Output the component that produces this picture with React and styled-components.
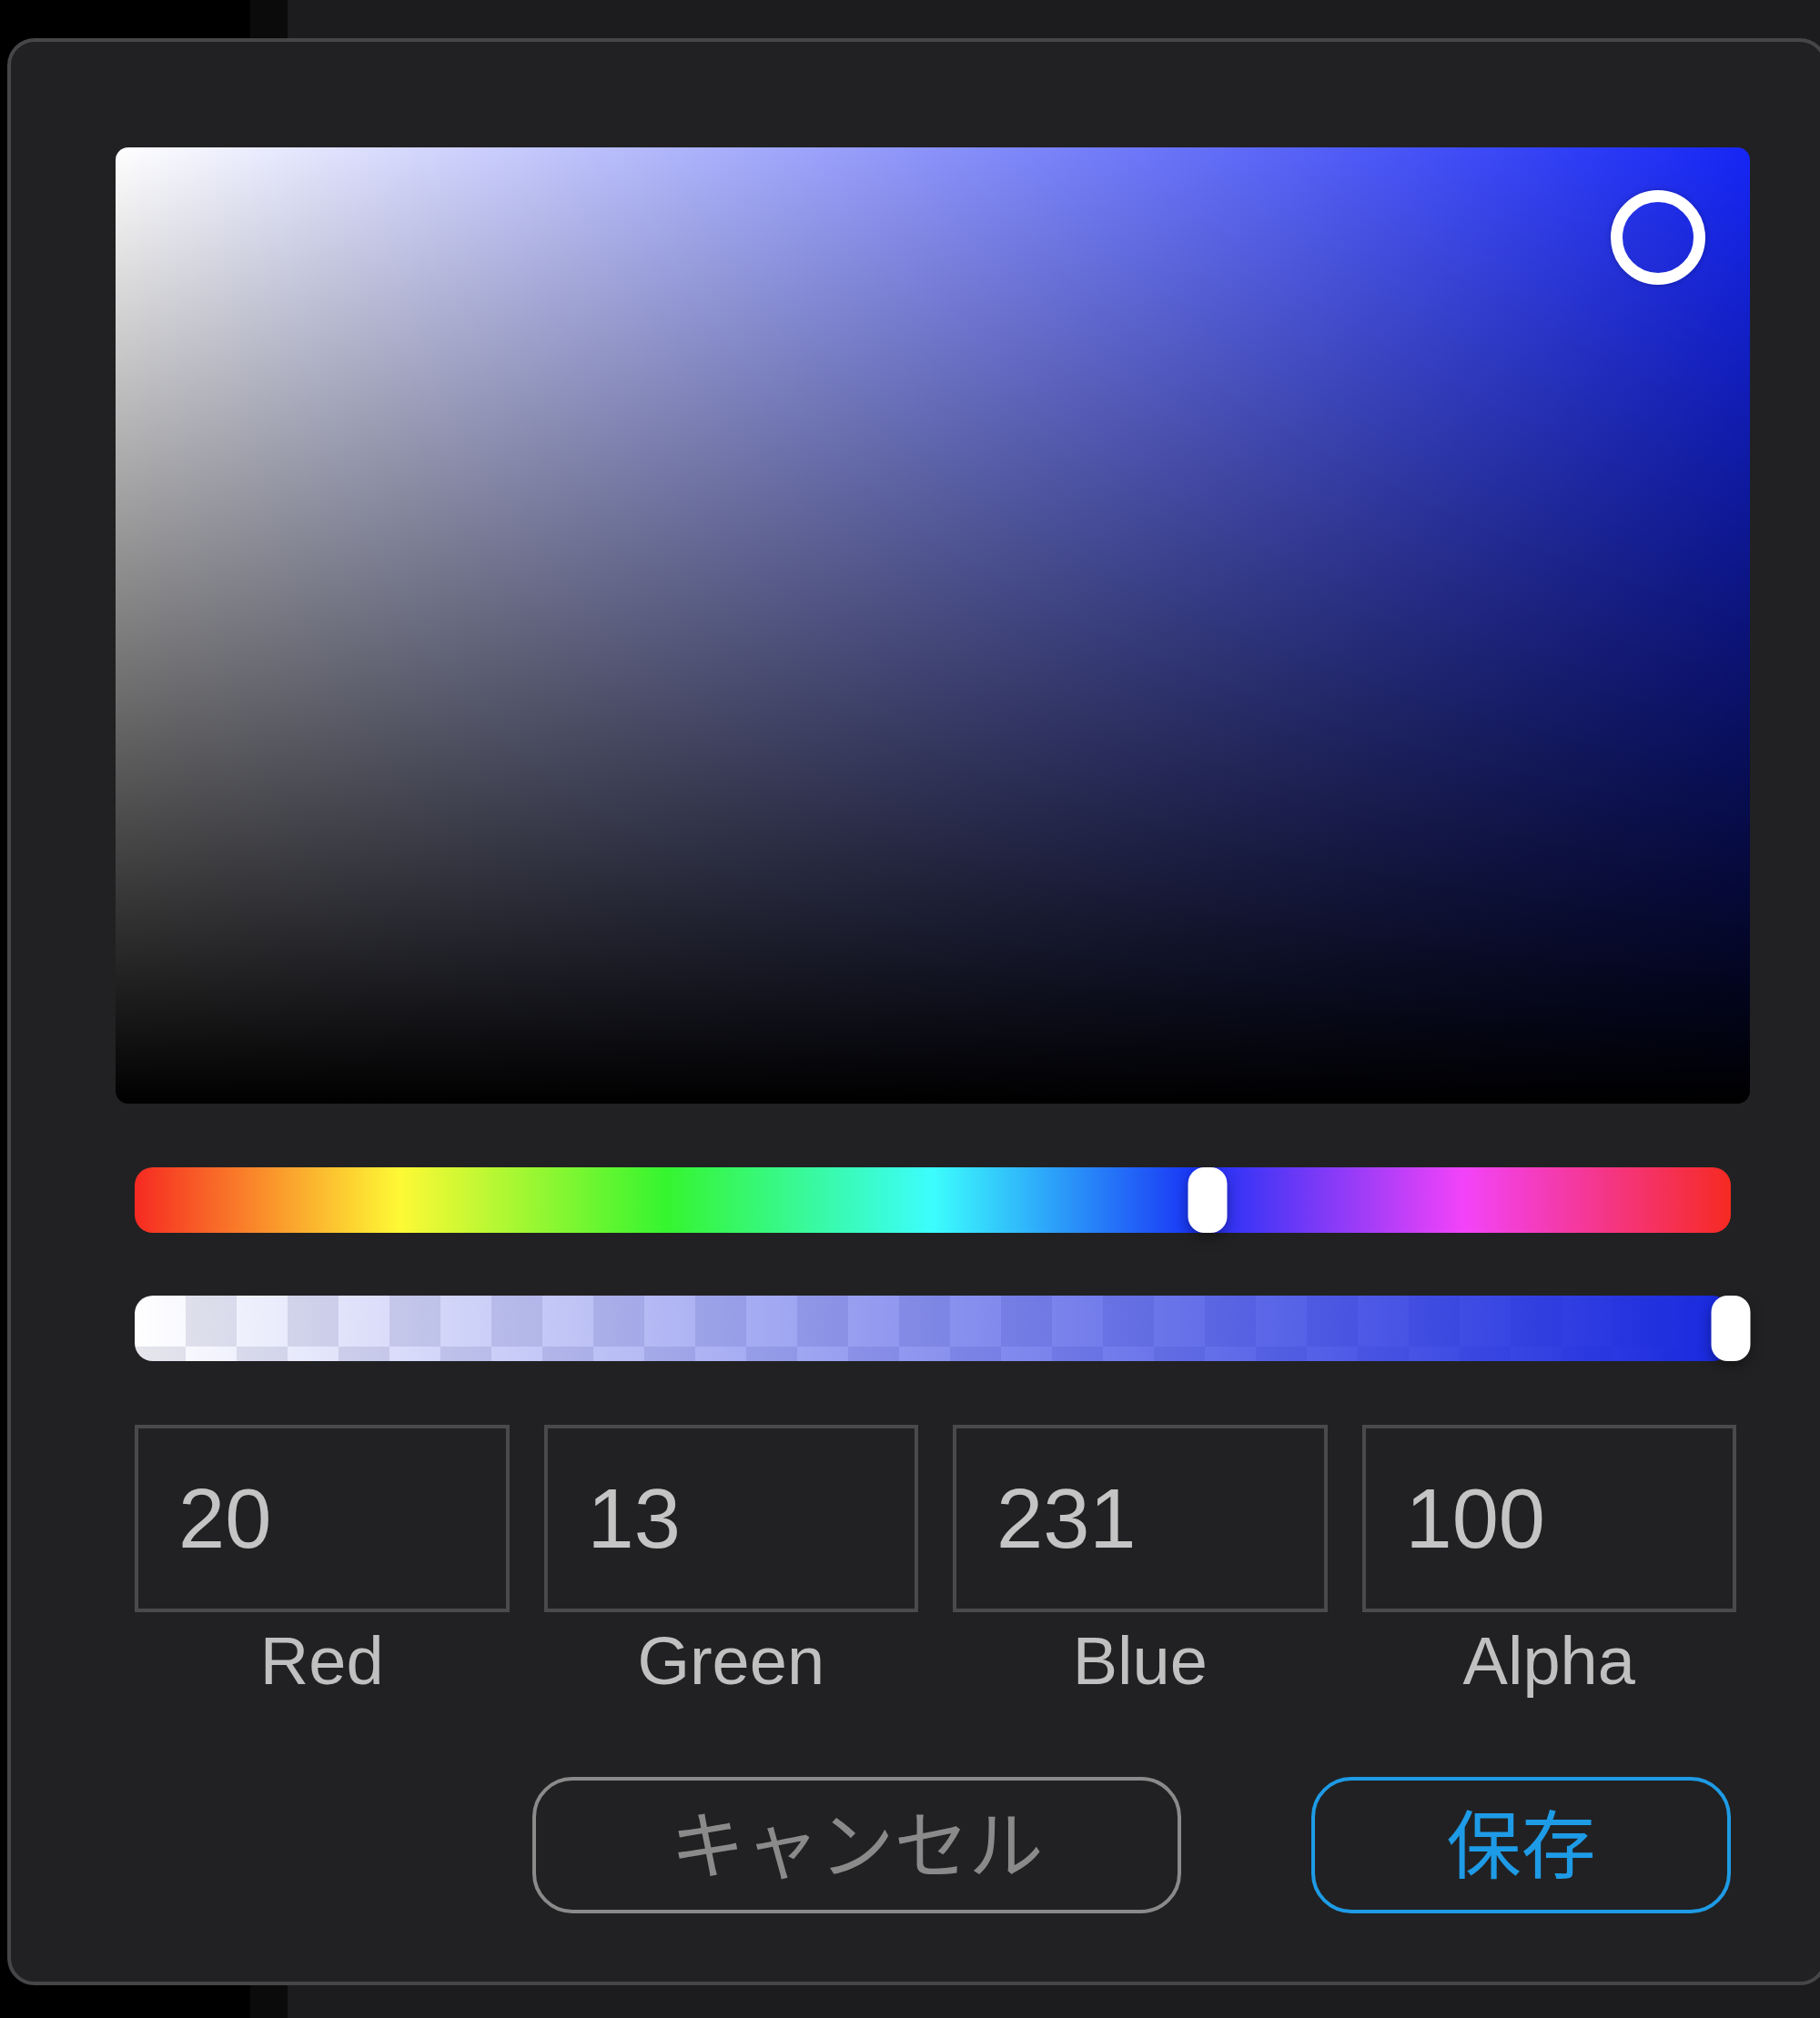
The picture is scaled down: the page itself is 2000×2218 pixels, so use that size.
import React from 'react';
import styled, { createGlobalStyle } from 'styled-components';

const HUE_COLOR = 'rgb(22, 38, 245)';
const ALPHA_END = 'rgb(24, 40, 222)';

const GlobalStyle = createGlobalStyle`
  html, body {
    margin: 0;
    padding: 0;
    overflow: hidden;
  }
  body {
    /* the app window behind the dialog */
    background: linear-gradient(
      to right,
      #000 0 275px,
      #0b0b0c 275px 316px,
      #1c1c1e 316px
    );
    font-family: 'Liberation Sans', Arial, sans-serif;
  }
`;

const Page = styled.div`
  box-sizing: border-box;
  min-height: 2218px;
  padding: 42px 0 0 8px;
`;

const Panel = styled.div`
  box-sizing: border-box;
  width: 2000px;
  height: 2140px;
  border: 4px solid #464648;
  border-radius: 30px;
  background: #212123;
  padding: 116px 81px 0 115px;
  display: flex;
  flex-direction: column;
`;

const SatField = styled.div`
  position: relative;
  height: 1051px;
  border-radius: 14px;
  background:
    linear-gradient(to top, #000, rgba(0, 0, 0, 0)),
    linear-gradient(to right, #fff, rgba(255, 255, 255, 0)),
    ${HUE_COLOR};
`;

const SatCursor = styled.div`
  position: absolute;
  box-sizing: border-box;
  width: 104px;
  height: 104px;
  border: 13px solid #fff;
  border-radius: 50%;
  transform: translate(-50%, -50%);
  box-shadow: 0 0 6px rgba(0, 0, 0, 0.25);
`;

const Controls = styled.div`
  margin: 70px 21px 0;
  display: flex;
  flex-direction: column;
`;

const Track = styled.div`
  position: relative;
  height: 72px;
  border-radius: 20px;
  margin-top: ${(p) => p.$gap || 0}px;
  background: ${(p) =>
    p.$kind === 'hue'
      ? `linear-gradient(to right,
          #f62a22 0%,
          #fef935 16.6%,
          #35f52f 33.3%,
          #3cfdfd 50%,
          #1932f5 66.6%,
          #f343f9 83.3%,
          #f62a22 100%)`
      : `linear-gradient(to right, rgba(24, 40, 222, 0), ${ALPHA_END}),
         repeating-conic-gradient(#e6e6ec 0 25%, #fff 0 50%) 0 0 / 112px 112px`};
`;

const Thumb = styled.div`
  position: absolute;
  top: 0;
  width: 43px;
  height: 72px;
  border-radius: 18px;
  background: #fff;
  transform: translateX(-50%);
  box-shadow: 0 6px 14px rgba(0, 0, 0, 0.35);
`;

const Fields = styled.div`
  display: grid;
  grid-template-columns: repeat(4, 1fr);
  column-gap: 38px;
  margin: 70px -6px 0 0;
`;

const Field = styled.div`
  display: flex;
  flex-direction: column;
  align-items: center;
`;

const ValueBox = styled.div`
  box-sizing: border-box;
  width: 100%;
  height: 206px;
  border: 4px solid #4a4a4c;
  display: flex;
  align-items: center;
  padding-left: 44px;
  font-size: 92px;
  color: #c4c4c4;
`;

const FieldLabel = styled.div`
  margin-top: 17px;
  font-size: 74px;
  line-height: 1;
  color: #c0c0c0;
`;

const Actions = styled.div`
  display: flex;
  justify-content: flex-end;
  gap: 143px;
  margin-top: 90px;
`;

const ActionButton = styled.button`
  box-sizing: border-box;
  width: ${(p) => p.$width}px;
  height: 150px;
  border: 4px solid ${(p) => p.$color};
  border-radius: 44px;
  background: transparent;
  color: ${(p) => p.$color};
  font-family: 'Noto Sans CJK JP', 'Liberation Sans', sans-serif;
  font-size: 82px;
  font-weight: 400;
  line-height: 1;
  padding: 0 0 10px;
  display: flex;
  align-items: center;
  justify-content: center;
`;

const channels = [
  { label: 'Red', value: 20 },
  { label: 'Green', value: 13 },
  { label: 'Blue', value: 231 },
  { label: 'Alpha', value: 100 },
];

export default function App() {
  const r = 20;
  const g = 13;
  const b = 231;
  const max = Math.max(r, g, b);
  const min = Math.min(r, g, b);
  const hue = 240 + (60 * (r - g)) / (max - min);
  const sat = 1 - min / max;
  const val = max / 255;

  return (
    <>
      <GlobalStyle />
      <Page>
        <Panel>
          <SatField>
            <SatCursor style={{ left: `${sat * 100}%`, top: `${(1 - val) * 100}%` }} />
          </SatField>
          <Controls>
            <Track $kind="hue">
              <Thumb style={{ left: `${(hue / 360) * 100}%` }} />
            </Track>
            <Track $kind="alpha" $gap={69}>
              <Thumb style={{ left: '100%' }} />
            </Track>
            <Fields>
              {channels.map((c) => (
                <Field key={c.label}>
                  <ValueBox>{c.value}</ValueBox>
                  <FieldLabel>{c.label}</FieldLabel>
                </Field>
              ))}
            </Fields>
            <Actions>
              <ActionButton $width={713} $color="#8a8a8a">キャンセル</ActionButton>
              <ActionButton $width={461} $color="#1e9be6">保存</ActionButton>
            </Actions>
          </Controls>
        </Panel>
      </Page>
    </>
  );
}
